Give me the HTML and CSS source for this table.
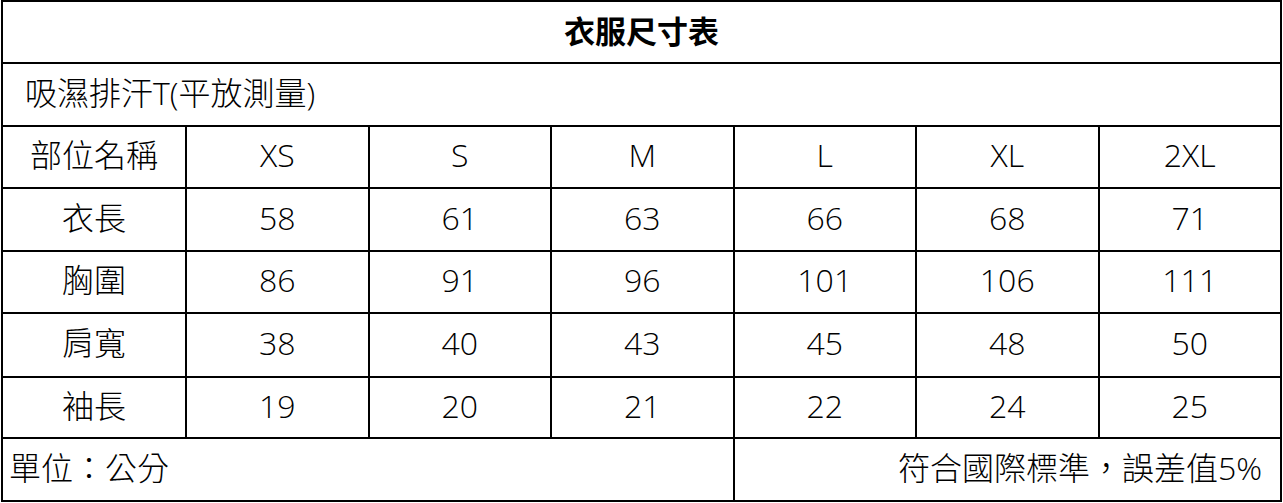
FILE: index.html
```html
<!DOCTYPE html>
<html lang="zh-Hant">
<head>
<meta charset="utf-8">
<title>衣服尺寸表</title>
<link rel="stylesheet" href="styles.css">
</head>
<body>
<table class="size-table">
  <colgroup>
    <col class="col-label">
    <col><col><col><col><col><col>
  </colgroup>
  <tr class="row-a"><th class="title" colspan="7">衣服尺寸表</th></tr>
  <tr class="row-b"><td class="subtitle" colspan="7">吸濕排汗T(平放測量)</td></tr>
  <tr class="row-a"><td>部位名稱</td><td>XS</td><td>S</td><td>M</td><td>L</td><td>XL</td><td>2XL</td></tr>
  <tr class="row-b"><td>衣長</td><td>58</td><td>61</td><td>63</td><td>66</td><td>68</td><td>71</td></tr>
  <tr class="row-a"><td>胸圍</td><td>86</td><td>91</td><td>96</td><td>101</td><td>106</td><td>111</td></tr>
  <tr class="row-c"><td>肩寬</td><td>38</td><td>40</td><td>43</td><td>45</td><td>48</td><td>50</td></tr>
  <tr class="row-d"><td>袖長</td><td>19</td><td>20</td><td>21</td><td>22</td><td>24</td><td>25</td></tr>
  <tr class="row-b"><td class="foot-left" colspan="4">單位：公分</td><td class="foot-right" colspan="3">符合國際標準，誤差值5%</td></tr>
</table>
</body>
</html>
```

FILE: styles.css
```css
html, body {
  margin: 0;
  padding: 0;
  background: #fff;
}
body {
  padding: 0 0 0 1px;
}
.size-table {
  width: 1281px;
  table-layout: fixed;
  border-collapse: collapse;
  font-family: "Open Sans", "Noto Sans CJK TC", sans-serif;
  font-size: 32px;
  font-weight: 300;
  color: #000;
}
.col-label {
  width: 184px;
}
.size-table th,
.size-table td {
  border: 2px solid #000;
  padding: 0 0 4px 0;
  text-align: center;
  vertical-align: middle;
  font-weight: 300;
  line-height: 1;
}
.row-a { height: 62px; }
.row-b { height: 63px; }
.row-c { height: 64px; }
.row-d { height: 61px; }
.size-table .title {
  font-family: "Noto Sans CJK TC", sans-serif;
  font-weight: bold;
  font-size: 31px;
  padding-bottom: 6px;
}
.size-table .subtitle {
  text-align: left;
  padding-left: 22px;
}
.size-table .foot-left {
  text-align: left;
  padding-left: 6px;
}
.size-table .foot-right {
  text-align: right;
  padding-right: 18px;
}
```
